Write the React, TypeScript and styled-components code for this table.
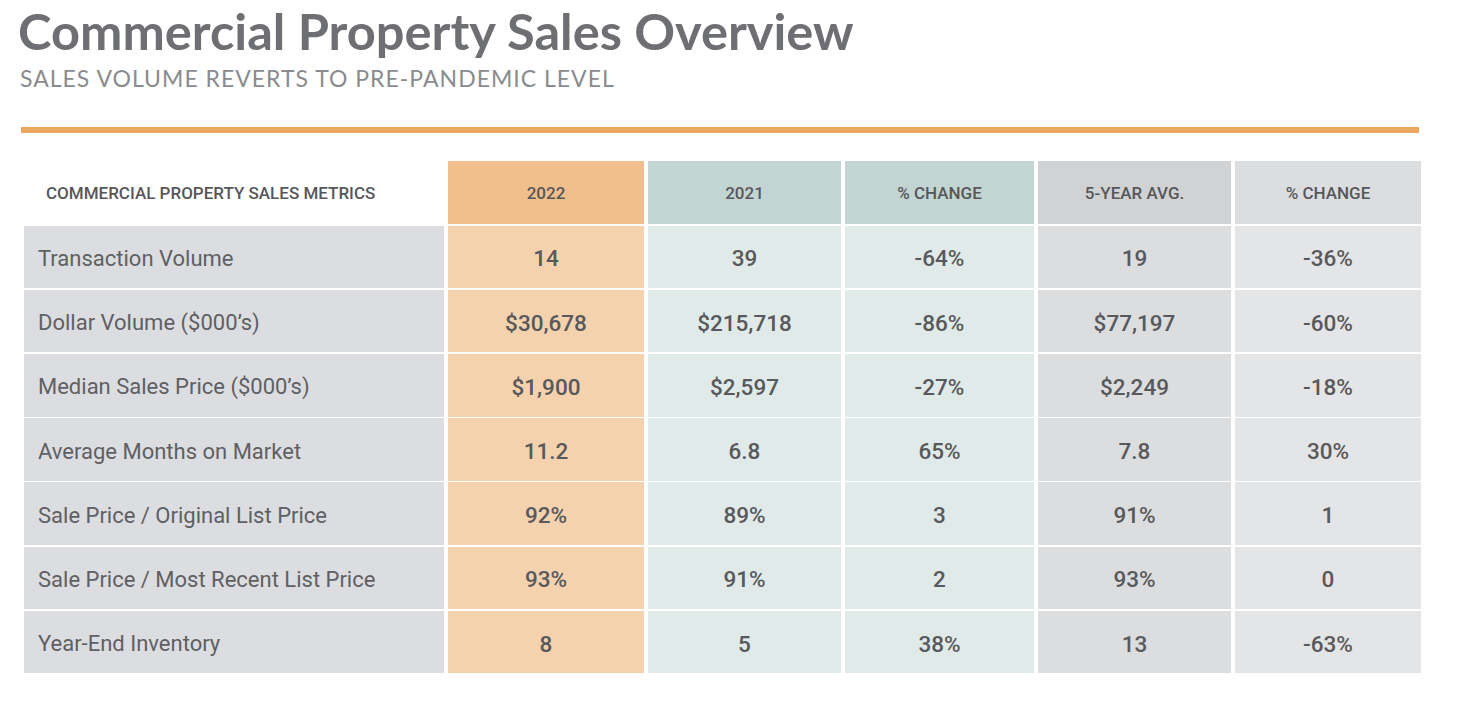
import styled, { createGlobalStyle } from "styled-components";

const GlobalStyle = createGlobalStyle`
  html, body {
    margin: 0;
    padding: 0;
    background: #ffffff;
  }
  body {
    font-family: Roboto, "Liberation Sans", sans-serif;
    color: #5a5b5d;
  }
`;

const Page = styled.div`
  width: 1462px;
  height: 722px;
  box-sizing: border-box;
  padding: 5px 0 0 18px;
  display: flex;
  flex-direction: column;
`;

const Title = styled.h1`
  margin: 0;
  font-family: Lato, "Open Sans", sans-serif;
  font-weight: 700;
  font-size: 50.6px;
  line-height: 52px;
  color: #6e6f72;
`;

const Subtitle = styled.h2`
  margin: 8px 0 0 2px;
  font-family: Lato, "Open Sans", sans-serif;
  font-weight: 400;
  font-size: 23px;
  line-height: 26px;
  letter-spacing: 1px;
  color: #8a8b8e;
`;

const Rule = styled.div`
  margin: 36px 0 0 3px;
  width: 1398px;
  height: 6px;
  background: #eba65f;
`;

const Grid = styled.div`
  margin: 28px 0 0 6px;
  display: grid;
  grid-template-columns: 420px 196px 193px 189px 193px 186px;
  grid-template-rows: 63px repeat(7, 62.5px);
  column-gap: 4px;
  row-gap: 1.7px;
`;

type Tone = "label" | "current" | "prior" | "avg" | "avgChange";

const headColors: Record<Tone, string> = {
  label: "transparent",
  current: "#f1bf8c",
  prior: "#c3d5d3",
  avg: "#d1d2d4",
  avgChange: "#dcdddf",
};

const bodyColors: Record<Tone, string> = {
  label: "#dcdde0",
  current: "#f5d2ae",
  prior: "#e0eae8",
  avg: "#dcdddf",
  avgChange: "#e4e5e6",
};

const HeadCell = styled.div<{ $tone: Tone }>`
  display: flex;
  align-items: center;
  justify-content: ${({ $tone }) => ($tone === "label" ? "flex-start" : "center")};
  padding-left: ${({ $tone }) => ($tone === "label" ? "22px" : "0")};
  background: ${({ $tone }) => headColors[$tone]};
  font-weight: 500;
  font-size: 17px;
  color: #56575a;
  text-transform: uppercase;
`;

const LabelCell = styled.div`
  display: flex;
  align-items: center;
  padding: 3px 0 0 14px;
  background: ${bodyColors.label};
  font-size: 22px;
  font-weight: 400;
  color: #5f6063;
`;

const ValueCell = styled.div<{ $tone: Tone }>`
  display: flex;
  align-items: center;
  justify-content: center;
  padding-top: 3px;
  background: ${({ $tone }) => bodyColors[$tone]};
  font-size: 22.5px;
  font-weight: 500;
  color: #58595c;
`;

const columns: { title: string; tone: Tone }[] = [
  { title: "2022", tone: "current" },
  { title: "2021", tone: "prior" },
  { title: "% Change", tone: "prior" },
  { title: "5-Year Avg.", tone: "avg" },
  { title: "% Change", tone: "avgChange" },
];

const rows: { label: string; values: string[] }[] = [
  { label: "Transaction Volume", values: ["14", "39", "-64%", "19", "-36%"] },
  { label: "Dollar Volume ($000’s)", values: ["$30,678", "$215,718", "-86%", "$77,197", "-60%"] },
  { label: "Median Sales Price ($000’s)", values: ["$1,900", "$2,597", "-27%", "$2,249", "-18%"] },
  { label: "Average Months on Market", values: ["11.2", "6.8", "65%", "7.8", "30%"] },
  { label: "Sale Price / Original List Price", values: ["92%", "89%", "3", "91%", "1"] },
  { label: "Sale Price / Most Recent List Price", values: ["93%", "91%", "2", "93%", "0"] },
  { label: "Year-End Inventory", values: ["8", "5", "38%", "13", "-63%"] },
];

export default function App() {
  return (
    <Page>
      <GlobalStyle />
      <Title>Commercial Property Sales Overview</Title>
      <Subtitle>SALES VOLUME REVERTS TO PRE-PANDEMIC LEVEL</Subtitle>
      <Rule />
      <Grid>
        <HeadCell $tone="label">Commercial Property Sales Metrics</HeadCell>
        {columns.map((c, i) => (
          <HeadCell key={i} $tone={c.tone}>
            {c.title}
          </HeadCell>
        ))}
        {rows.map((r) => [
          <LabelCell key={r.label}>{r.label}</LabelCell>,
          ...r.values.map((v, i) => (
            <ValueCell key={r.label + i} $tone={columns[i].tone}>
              {v}
            </ValueCell>
          )),
        ])}
      </Grid>
    </Page>
  );
}
